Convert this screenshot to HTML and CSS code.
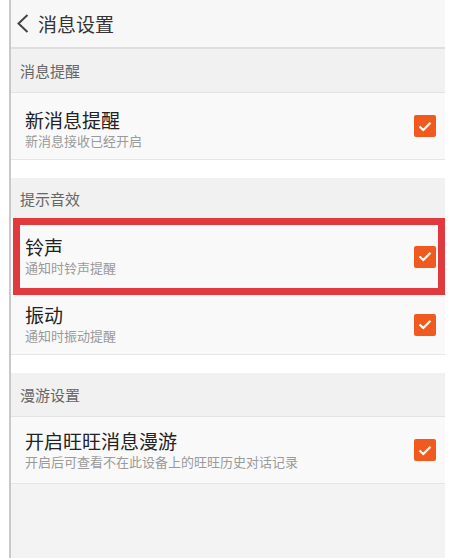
FILE: index.html
```html
<!DOCTYPE html>
<html>
<head>
  <meta charset="utf-8">
  <title>消息设置</title>
  <link rel="stylesheet" href="styles.css">
</head>
<body>
  <div class="screen">
    <div class="topbar">
      <svg class="back" width="13" height="19" viewBox="0 0 13 19"><path d="M11.5 1 L2.5 9.5 L11.5 18" fill="none" stroke="#444" stroke-width="2"/></svg>
      <span class="topbar-title">消息设置</span>
    </div>

    <div class="section s1">消息提醒</div>
    <div class="item i1">
      <div class="item-text">
        <div class="item-title">新消息提醒</div>
        <div class="item-sub">新消息接收已经开启</div>
      </div>
      <span class="check"><svg width="14" height="11" viewBox="0 0 14 11"><path d="M1.5 5.5 L5.3 9 L12.5 1.8" fill="none" stroke="#fff" stroke-width="2.2"/></svg></span>
    </div>

    <div class="gap"></div>

    <div class="section s2">提示音效</div>
    <div class="item i2 marked">
      <div class="item-text">
        <div class="item-title">铃声</div>
        <div class="item-sub">通知时铃声提醒</div>
      </div>
      <span class="check"><svg width="14" height="11" viewBox="0 0 14 11"><path d="M1.5 5.5 L5.3 9 L12.5 1.8" fill="none" stroke="#fff" stroke-width="2.2"/></svg></span>
    </div>
    <div class="item i3">
      <div class="item-text">
        <div class="item-title">振动</div>
        <div class="item-sub">通知时振动提醒</div>
      </div>
      <span class="check"><svg width="14" height="11" viewBox="0 0 14 11"><path d="M1.5 5.5 L5.3 9 L12.5 1.8" fill="none" stroke="#fff" stroke-width="2.2"/></svg></span>
    </div>

    <div class="gap"></div>

    <div class="section s3">漫游设置</div>
    <div class="item i4">
      <div class="item-text">
        <div class="item-title">开启旺旺消息漫游</div>
        <div class="item-sub">开启后可查看不在此设备上的旺旺历史对话记录</div>
      </div>
      <span class="check"><svg width="14" height="11" viewBox="0 0 14 11"><path d="M1.5 5.5 L5.3 9 L12.5 1.8" fill="none" stroke="#fff" stroke-width="2.2"/></svg></span>
    </div>
  </div>
</body>
</html>
```

FILE: styles.css
```css
body {
  margin: 0;
  background: #fff;
  font-family: "Noto Sans CJK SC", "Noto Sans", sans-serif;
}
.screen {
  margin-left: 9px;
  width: 434px;
  height: 558px;
  border-left: 2px solid #c9c9c9;
  background: #f3f3f3;
  overflow: hidden;
}
.topbar {
  height: 47px;
  background: #f7f7f7;
  border-bottom: 2px solid #dedede;
  display: flex;
  align-items: center;
  padding-left: 5px;
}
.back {
  margin-right: 9px;
}
.topbar-title {
  font-size: 19px;
  color: #333;
}
.section {
  background: #f1f1f1;
  color: #666;
  font-size: 15px;
  padding-left: 9px;
  display: flex;
  align-items: center;
}
.s1 {
  height: 43px;
  border-bottom: 1px solid #e3e3e3;
}
.s2 {
  height: 40px;
}
.s3 {
  height: 43px;
  border-bottom: 1px solid #e3e3e3;
}
.gap {
  height: 18px;
  background: #fff;
}
.item {
  background: #f9f9f9;
  display: flex;
  align-items: center;
  justify-content: space-between;
  padding: 0 9px 0 14px;
  box-sizing: border-box;
  position: relative;
}
.item-text {
  align-self: flex-start;
}
.item-title {
  font-size: 19px;
  line-height: 22px;
  color: #222;
}
.item-sub {
  font-size: 13px;
  line-height: 20px;
  color: #9a9a9a;
}
.i1 {
  height: 67px;
  border-bottom: 1px solid #e6e6e6;
}
.i1 .item-text { padding-top: 16px; }
.i2 {
  height: 77px;
}
.i2 .item-text { padding-top: 18px; }
.i3 {
  height: 60px;
  border-bottom: 1px solid #e6e6e6;
}
.i3 .item-text { padding-top: 9px; }
.i4 {
  height: 67px;
  border-bottom: 1px solid #e6e6e6;
}
.i4 .item-text { padding-top: 13px; }
.check {
  width: 22px;
  height: 22px;
  border-radius: 2px;
  background: #f05a1f;
  display: flex;
  align-items: center;
  justify-content: center;
}
.marked::after {
  content: "";
  position: absolute;
  left: 2px;
  right: 0;
  top: 0;
  bottom: 0;
  border: 7px solid #e03a3f;
}
```
